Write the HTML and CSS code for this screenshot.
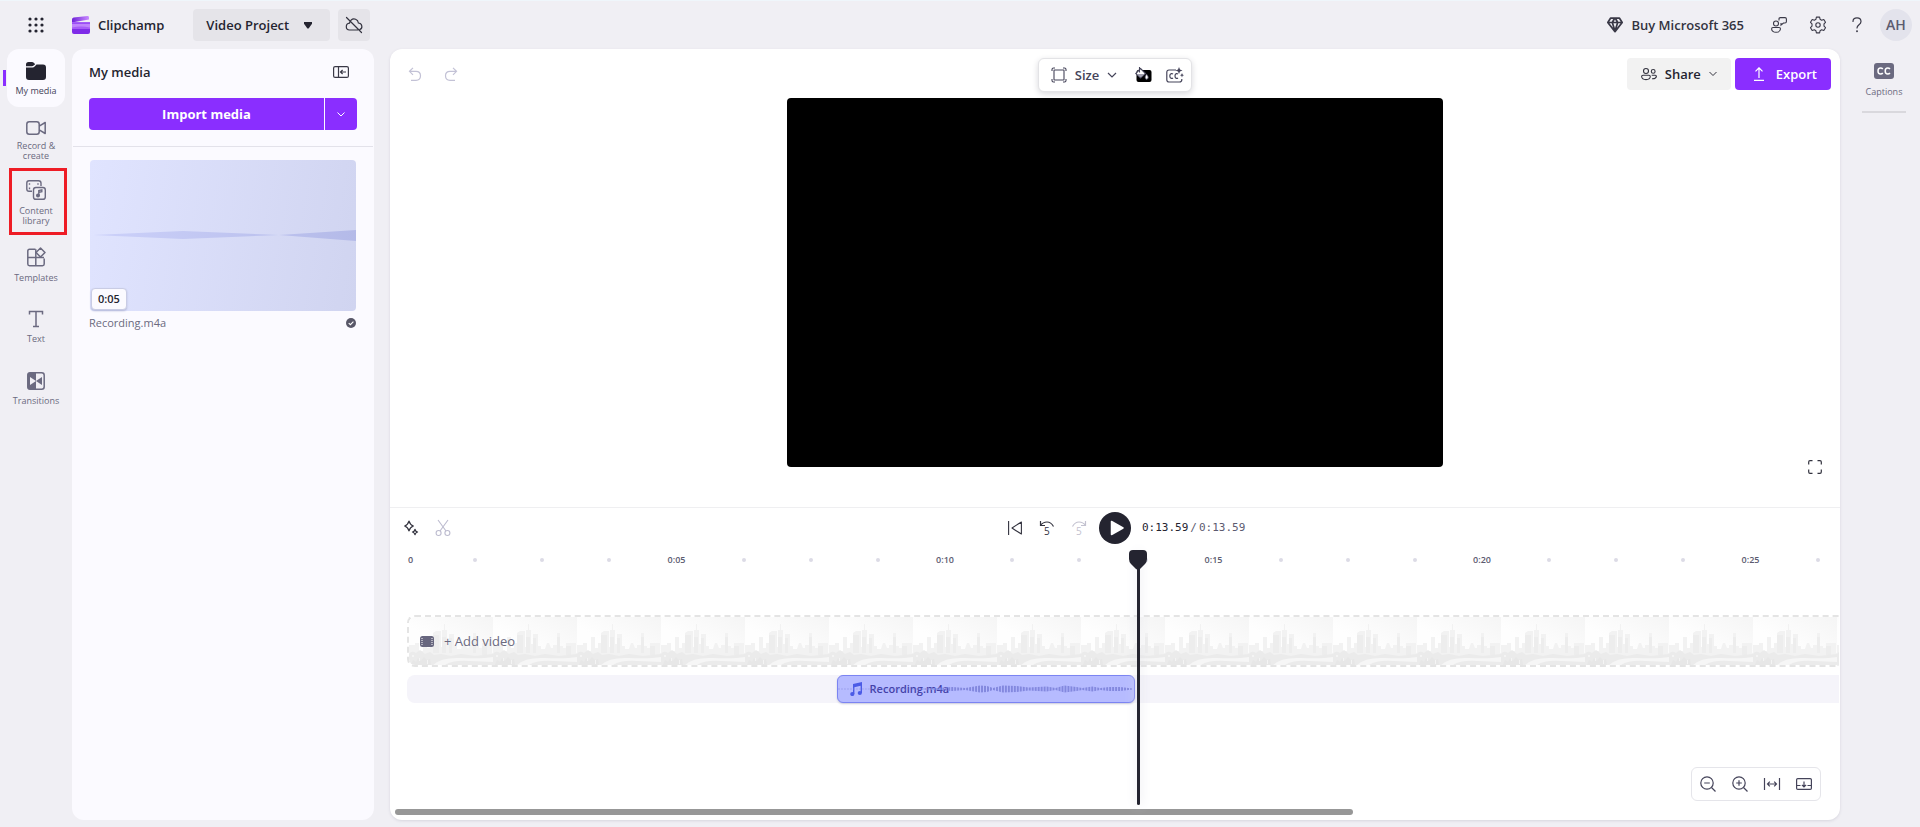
FILE: index.html
```html
<!DOCTYPE html>
<html lang="en">
<head>
<meta charset="utf-8">
<title>Clipchamp - Video Project</title>
<link rel="stylesheet" href="styles.css">
</head>
<body>
<header class="topbar">
  <button class="icon-btn" aria-label="App launcher">
    <svg width="16" height="16" viewBox="0 0 16 16" fill="#242430"><circle cx="2" cy="2" r="1.6"/><circle cx="8" cy="2" r="1.6"/><circle cx="14" cy="2" r="1.6"/><circle cx="2" cy="8" r="1.6"/><circle cx="8" cy="8" r="1.6"/><circle cx="14" cy="8" r="1.6"/><circle cx="2" cy="14" r="1.6"/><circle cx="8" cy="14" r="1.6"/><circle cx="14" cy="14" r="1.6"/></svg>
  </button>
  <a class="brand" href="#">
    <svg width="18" height="18" viewBox="0 0 18 18">
      <defs><linearGradient id="lg" x1="0" x2="1"><stop offset="0" stop-color="#6f22d8"/><stop offset="1" stop-color="#c98bff"/></linearGradient></defs>
      <path d="M0 3.6Q0 2 1.6 1.6L15.6 0Q17 0 17 1.4V3.4L0 6.4Z" fill="url(#lg)"/>
      <path d="M0 6.2H18V12H0Z" fill="#c084fc"/><path d="M0 6.2H18V8H0Z" fill="#9b4df5"/>
      <path d="M0 11.4Q9 9.6 18 11.4V13.6H0Z" fill="#a65cf7"/>
      <path d="M0 13H18V16Q18 18 16 18H2Q0 18 0 16Z" fill="#7f2be8"/>
    </svg>
    <span>Clipchamp</span>
  </a>
  <button class="project-btn"><span>Video Project</span><svg width="8" height="7" viewBox="0 0 8 7"><path d="M0 0H8V1.800L4.600 6.600H3.400L0 1.800Z" fill="#242430"/></svg></button>
  <button class="cloud-btn" aria-label="Not backed up">
    <svg width="18" height="18" viewBox="0 0 18 18" fill="none" stroke="#33333f" stroke-width="1.2" stroke-linecap="round"><path d="M6 4.200C8.800 1.600 13 3.400 13.400 7 17.600 7.400 17.800 12.400 15 13.400M12.500 14H4.500C.300 13.800.200 7.600 4.500 7.200 4.600 6.400 4.900 5.600 5.300 5M1.500 1.500L16.500 16.500"/></svg>
  </button>
  <div class="topbar-right">
    <a class="buy" href="#">
      <svg width="16" height="16" viewBox="0 0 16 16" fill="none" stroke="#3a3947" stroke-width="1.7" stroke-linejoin="round"><path d="M3.500 1.200H12.500L15.200 5.500 8 14.600.8 5.500ZM1 5.500H15M5.300 5.500L8 14 10.700 5.500 8.500 1.500H7.500Z"/></svg>
      <span>Buy Microsoft 365</span>
    </a>
    <button class="icon-btn" aria-label="Feedback"><svg width="16" height="16" viewBox="0 0 16 16" fill="none" stroke="#3a3947" stroke-width="1.1"><circle cx="5" cy="6.500" r="2.500"/><path d="M2 10.500H8Q9.500 10.500 9.500 12 9 15.300 5 15.300T.6 12Q.6 10.500 2 10.500ZM8 3.500V2Q8 .6 9.400.6H14Q15.400.6 15.400 2V4.600Q15.400 6 14 6H12.500L10 8V6"/></svg></button>
    <button class="icon-btn" aria-label="Settings"><svg width="18" height="18" viewBox="0 0 18 18" fill="none" stroke="#3a3947" stroke-width="1.1" stroke-linejoin="round"><circle cx="9" cy="9" r="2.200"/><path d="M7.400 1.100H10.600L11.100 3.300 12.600 4.200 14.800 3.500 16.500 6.300 15 7.900V10.100L16.500 11.700 14.800 14.500 12.600 13.800 11.100 14.700 10.600 16.900H7.400L6.900 14.700 5.400 13.800 3.200 14.500 1.500 11.700 3 10.100V7.900L1.500 6.300 3.200 3.500 5.400 4.200 6.900 3.300Z"/></svg></button>
    <button class="icon-btn" aria-label="Help"><svg width="10" height="16" viewBox="0 0 10 16" fill="none" stroke="#3a3947" stroke-width="1.200" stroke-linecap="round"><path d="M1 4.500Q1 .8 5 .8T9 4.500Q9 6.200 7 7.800T5 11"/><circle cx="5" cy="14.300" r=".4"/></svg></button>
    <button class="avatar">AH</button>
  </div>
</header>

<div class="workspace">
  <nav class="rail">
    <a class="rail-item active" href="#">
      <svg width="20" height="18" viewBox="0 0 20 18" fill="#242430"><path d="M0 4V2.500Q0 0 2.500 0H6Q7 0 7.800.8L9.200 2.200 7.600 3.600Q7 4.200 6 4.200H0Z"/><path d="M0 5.400H6.500Q7.800 5.400 8.600 4.500L10.500 2.500H17Q20 2.500 20 5.500V15Q20 18 17 18H3Q0 18 0 15Z"/></svg>
      <span>My media</span>
    </a>
    <a class="rail-item" href="#">
      <svg width="20" height="14" viewBox="0 0 20 14" fill="none" stroke="#6b6a80" stroke-width="1.500" stroke-linejoin="round"><rect x=".8" y=".8" width="12.400" height="12.400" rx="2.500"/><path d="M13.200 5.200L19.200 1.500V12.500L13.200 8.800"/></svg>
      <span>Record &amp;<br>create</span>
    </a>
    <a class="rail-item highlighted" href="#">
      <svg width="20" height="20" viewBox="0 0 20 20" fill="none" stroke="#6b6a80" stroke-width="1.400"><path d="M6 11.300H3Q.8 11.300.8 9V3Q.8.8 3 .8H12.500Q15 .8 15 3V6"/><rect x="7.500" y="7.500" width="11.800" height="11.800" rx="2.400"/><path d="M3.500 3.200V4.800M3.500 7.600V9.200M12 3.200V4.800M12.800 15.500V10.500L15.800 9.800V11.600L13 12.300"/><circle cx="12" cy="15.600" r="1.300" fill="#6b6a80"/></svg>
      <span>Content<br>library</span>
    </a>
    <a class="rail-item" href="#">
      <svg width="20" height="20" viewBox="0 0 20 20" fill="none" stroke="#6b6a80" stroke-width="1.500" stroke-linejoin="round"><path d="M9.500 2.300H3.500Q1.800 2.300 1.800 4V17Q1.800 18.700 3.500 18.700H16.500Q18.200 18.700 18.200 17V11.500M9.800 2.300V18.700M1.800 10.400H18"/><path d="M14.500 1L19 5.500 14.500 10 10 5.500Z" fill="#f0eff4"/></svg>
      <span>Templates</span>
    </a>
    <a class="rail-item" href="#">
      <svg width="16" height="18" viewBox="0 0 16 18" fill="none" stroke="#6b6a80" stroke-width="1.500"><path d="M1.500 4.500V1.500H14.500V4.500M8 1.500V16.500M5 16.500H11"/></svg>
      <span>Text</span>
    </a>
    <a class="rail-item" href="#">
      <svg width="18" height="18" viewBox="0 0 18 18"><rect x=".8" y=".8" width="16.400" height="16.400" rx="2.500" fill="none" stroke="#6b6a80" stroke-width="1.500"/><path d="M3 .5H9V17.500H3Q.5 17.500.5 15V3Q.5.5 3 .5Z" fill="#6b6a80"/><path d="M3 5L9 9 3 13Z" fill="#f0eff4"/><path d="M15 5L9 9 15 13Z" fill="#6b6a80"/></svg>
      <span>Transitions</span>
    </a>
  </nav>

  <aside class="media">
    <div class="media-head">
      <h1 class="media-title">My media</h1>
      <button class="icon-btn collapse" aria-label="Collapse panel"><svg width="16" height="12" viewBox="0 0 16 12" fill="none" stroke="#3a3947" stroke-width="1.200"><rect x=".6" y=".6" width="14.800" height="10.800" rx="1.500"/><path d="M5.500.6V11.400M13 6H7.500M9.600 4L7.500 6 9.600 8"/></svg></button>
    </div>
    <div class="import">
      <button class="import-main">Import media</button>
      <button class="import-more" aria-label="More import options"><svg width="8" height="5" viewBox="0 0 8 5" fill="none" stroke="#fff"><path d="M.5.5L4 4 7.500.5"/></svg></button>
    </div>
    <div class="media-list">
      <figure class="clip-card">
        <div class="thumb">
          <svg class="thumb-wave" viewBox="0 0 266 16" preserveAspectRatio="none"><defs><linearGradient id="wv"><stop offset="0" stop-color="#ccd1fa"/><stop offset="1" stop-color="#b4bae8"/></linearGradient></defs><path d="M3 7L93 3 189 7 266 2V13L189 7 93 11Z" fill="url(#wv)"/></svg>
          <span class="duration">0:05</span>
        </div>
        <figcaption class="clip-name"><span>Recording.m4a</span><svg width="10" height="10" viewBox="0 0 10 10"><circle cx="5" cy="5" r="5" fill="#585768"/><path d="M2.700 5.100L4.400 6.700 7.400 3.600" fill="none" stroke="#fff" stroke-width="1.100"/></svg></figcaption>
      </figure>
    </div>
  </aside>

  <main class="editor">
    <section class="preview">
      <div class="preview-bar">
        <div class="history">
          <button class="icon-btn" aria-label="Undo"><svg width="14" height="14" viewBox="0 0 14 14" fill="none" stroke="#c3c2d6" stroke-width="1.200"><path d="M5 .8L1.500 4.300 5 7.800M1.500 4.300H8Q12.500 4.300 12.500 8.800T8 13.300H3"/></svg></button>
          <button class="icon-btn" aria-label="Redo"><svg width="14" height="14" viewBox="0 0 14 14" fill="none" stroke="#c3c2d6" stroke-width="1.200"><path d="M9 .8L12.500 4.300 9 7.800M12.500 4.300H6Q1.500 4.300 1.500 8.800T6 13.300H11"/></svg></button>
        </div>
        <div class="size-bar">
          <button class="size-btn"><svg width="16" height="16" viewBox="0 0 16 16" fill="none" stroke="#45445a" stroke-width="1.100"><rect x="3" y="3" width="10" height="10" rx=".5"/><path d="M1 4V2.500Q1 1 2.500 1H4M12 1H13.500Q15 1 15 2.500V4M15 12V13.500Q15 15 13.500 15H12M4 15H2.500Q1 15 1 13.500V12"/></svg><span>Size</span><svg width="10" height="6" viewBox="0 0 10 6" fill="none" stroke="#45445a" stroke-width="1.200"><path d="M1 1L5 5 9 1"/></svg></button>
          <button class="icon-btn" aria-label="Background colour"><svg width="17" height="16" viewBox="0 0 17 16"><rect x="1.500" y="3" width="15" height="12" rx="2" fill="#000"/><path d="M5.500 1.500L10.500 6.500 5.500 11 .8 6.500ZM4.500 0V5.500" fill="#fff" stroke="#45445a" stroke-width="1.100"/><path d="M2 7H9.500L5.500 10.500Z" fill="#a09fae"/><path d="M11.500 7Q14.500 10.500 12.500 12T10 10Z" fill="#fff" stroke="#45445a" stroke-width=".7"/></svg></button>
          <button class="icon-btn" aria-label="Auto captions"><svg width="18" height="16" viewBox="0 0 18 16" fill="none" stroke="#45445a" stroke-width="1.200"><path d="M10 3H3Q.8 3 .8 5.200V12.800Q.8 15 3 15H13.500Q15.800 15 15.800 12.800V12M7 7Q6.200 6.400 5.300 6.600 3.800 7 3.800 9T5.300 11.400Q6.200 11.600 7 11M12 7Q11.200 6.400 10.300 6.600 9 7 9 9T10.300 11.400Q11.200 11.600 12 11"/><path d="M13 0L14 2.500 16.500 3.500 14 4.500 13 7 12 4.500 9.500 3.500 12 2.500ZM16 6L16.600 7.600 18 8.200 16.600 8.800 16 10.400 15.400 8.800 14 8.200 15.400 7.600Z" fill="#45445a" stroke="none"/></svg></button>
        </div>
        <div class="actions">
          <button class="share-btn"><svg width="16" height="14" viewBox="0 0 16 14" fill="none" stroke="#33333f" stroke-width="1.100"><circle cx="5" cy="4" r="2.500"/><circle cx="12.200" cy="4.400" r="1.900"/><path d="M2 8.200H8Q9.300 8.200 9.300 9.500 9 12.600 5 12.600T.6 9.500Q.6 8.200 2 8.200ZM10.700 8.200H14.300Q15.400 8.200 15.400 9.400 15 12 11 11.700"/></svg><span>Share</span><svg width="8" height="6" viewBox="0 0 8 6" fill="none" stroke="#33333f"><path d="M.5 1L4 4.500 7.500 1"/></svg></button>
          <button class="export-btn"><svg width="10" height="14" viewBox="0 0 10 14" fill="none" stroke="#fff" stroke-width="1.200"><path d="M5 11V.8M1.500 4.300L5 .8 8.500 4.300M0 13.300H10"/></svg><span>Export</span></button>
        </div>
      </div>
      <div class="stage">
        <div class="video" role="img" aria-label="Video preview"></div>
        <button class="icon-btn fullscreen" aria-label="Full screen"><svg width="14" height="14" viewBox="0 0 14 14" fill="none" stroke="#33333f" stroke-width="1.200"><path d="M.7 4.500V2Q.7.7 2 .7H4.500M9.500.7H12Q13.300.7 13.300 2V4.500M13.300 9.500V12Q13.300 13.300 12 13.300H9.500M4.500 13.300H2Q.7 13.300.7 12V9.500"/></svg></button>
      </div>
    </section>

    <section class="timeline">
      <div class="controls">
        <div class="controls-left">
          <div class="edit-tools">
            <button class="icon-btn" aria-label="Effects"><svg width="16" height="16" viewBox="0 0 16 16" fill="none" stroke="#33333f" stroke-width="1.300" stroke-linejoin="round"><path d="M6 1.200Q7 4.800 10.300 6 7 7.200 6 10.800 5 7.200 1.700 6 5 4.800 6 1.200ZM12 9.300Q12.500 11.400 14.500 12 12.500 12.600 12 14.700 11.500 12.600 9.500 12 11.500 11.400 12 9.300Z"/></svg></button>
            <button class="icon-btn" aria-label="Split"><svg width="16" height="18" viewBox="0 0 16 18" fill="none" stroke="#bcbbcf" stroke-width="1.100"><circle cx="3.600" cy="14" r="2.500"/><circle cx="12.400" cy="14" r="2.500"/><path d="M3 1L11 12M13 1L5 12"/></svg></button>
          </div>
          <div class="skips">
            <button class="icon-btn" aria-label="Skip to start"><svg width="14" height="14" viewBox="0 0 14 14" fill="none" stroke="#33333f" stroke-width="1.100" stroke-linejoin="round"><path d="M.6 0V14M13.400 1V13Q9 10.500 4 7 9 3.500 13.400 1Z"/></svg></button>
            <button class="icon-btn" aria-label="Back 5 seconds"><svg width="16" height="20" viewBox="0 0 16 20" fill="none" stroke="#33333f" stroke-width="1.200"><path d="M1.500 3V7.500H6M1.500 7.500Q4 4 8 4T14.500 8.500"/><text x="5" y="17" class="five">5</text></svg></button>
            <button class="icon-btn muted" aria-label="Forward 5 seconds"><svg width="16" height="20" viewBox="0 0 16 20" fill="none" stroke="#c3c2d0" stroke-width="1.200"><path d="M14.500 3V7.500H10M14.500 7.500Q12 4 8 4T1.500 8.500"/><text x="5" y="17" class="five">5</text></svg></button>
          </div>
        </div>
        <button class="play" aria-label="Play"><svg width="14" height="16" viewBox="0 0 14 16"><path d="M1.500 1.500L13 8 1.500 14.500Z" fill="#fff" stroke="#fff" stroke-width="1.500" stroke-linejoin="round"/></svg></button>
        <div class="time"><span class="time-now">0:13.59</span><span>/</span><span>0:13.59</span></div>
      </div>

      <div class="tracks">
        <div class="ruler">
          <div class="five-sec"><span class="tick first"><b>0</b></span><span class="tick"><i></i></span><span class="tick"><i></i></span><span class="tick"><i></i></span></div>
          <div class="five-sec"><span class="tick"><b>0:05</b></span><span class="tick"><i></i></span><span class="tick"><i></i></span><span class="tick"><i></i></span></div>
          <div class="five-sec"><span class="tick"><b>0:10</b></span><span class="tick"><i></i></span><span class="tick"><i></i></span><span class="tick"><i></i></span></div>
          <div class="five-sec"><span class="tick"><b>0:15</b></span><span class="tick"><i></i></span><span class="tick"><i></i></span><span class="tick"><i></i></span></div>
          <div class="five-sec"><span class="tick"><b>0:20</b></span><span class="tick"><i></i></span><span class="tick"><i></i></span><span class="tick"><i></i></span></div>
          <div class="five-sec"><span class="tick"><b>0:25</b></span><span class="tick"><i></i></span></div>
        </div>
        <button class="video-track">
          <svg class="skyline" width="100%" height="48">
            <defs>
              <linearGradient id="sky" x1="1" y1="0" x2="0" y2="1"><stop offset="0" stop-color="#f5f5f5"/><stop offset=".6" stop-color="#fefefe"/></linearGradient>
              <pattern id="city" width="84" height="48" patternUnits="userSpaceOnUse">
                <rect width="84" height="48" fill="url(#sky)"/>
                <path d="M0 28H6V26H10V34H14V20H18V31H21V26H24V16L27 14H32V30H33V13H35V7H36V13H38V27H40V17H45V29H48V32H52L54 26H56L58 31H60V28H64V16H67V29H70V31H73V26H83V36H84V48H0Z" fill="#f2f2f2"/>
                <path d="M24 18H30V36H24ZM33 20H37V36H33ZM40 21H43V36H40ZM64 20H67V36H64ZM73 29H78V38H73Z" fill="#ededed"/>
                <path d="M0 37Q3 33 7 36L11 33 16 37 21 35 25 38 32 37 42 39 52 37 66 39 84 37V48H0Z" fill="#ebebeb"/>
                <path d="M24 48Q32 40 52 41 72 42 84 40V45L60 44Q44 43 36 48Z" fill="#f6f6f6"/>
                <path d="M2 48L4 43 7 45 9 41 12 44 15 40 18 43 21 42 22 48Z" fill="#e7e7e7"/>
                <path d="M10 41H11V44H10ZM18 43H19V47H18ZM3 38H5V40H3Z" fill="#f4f4f4"/>
              </pattern>
            </defs>
            <rect width="100%" height="48" fill="url(#city)"/>
          </svg>
          <span class="add-video"><svg width="14" height="11" viewBox="0 0 14 11"><rect width="14" height="11" rx="2.500" fill="#68677f"/><path d="M2 2V9.500M12 2V9.500" stroke="#fff" stroke-dasharray="1 1" fill="none"/></svg><span>+ Add video</span></span>
        </button>
        <div class="audio-track">
          <button class="audio-clip">
            <svg class="clip-wave" width="298" height="26" viewBox="0 0 298 26" preserveAspectRatio="none">
              <defs><pattern id="bars" width="3" height="26" patternUnits="userSpaceOnUse"><rect width="2" height="26" fill="#8388de"/></pattern></defs>
              <path d="M0 12.700H75L100 12 115 11 128 12 143 9.500 150 10 156 12 166 9.500 180 10 192 11.500 210 10.500 219 12 228 9.500 240 11 246 12 256 10.500 264 12 273 11 284 11 297 12.500V13.500L284 15 273 15 264 14 256 15.500 246 14 240 15 228 16.500 219 14 210 15.500 192 14.500 180 16 166 16.500 156 14 150 16 143 16.500 128 14 115 15 100 14 75 13.300H0Z" fill="url(#bars)"/>
            </svg>
            <svg width="12" height="14" viewBox="0 0 12 14" fill="#4b5be6"><path d="M3 2L12 0V11H10.600V3.800L4.400 5.200V12H3Z"/><circle cx="2.300" cy="12" r="2.100"/><circle cx="9.800" cy="11" r="2.100"/></svg>
            <span>Recording.m4a</span>
          </button>
        </div>
        <div class="playhead"><svg width="18" height="20" viewBox="0 0 18 20"><path d="M4 0H14Q18 0 18 4V9Q18 12 16 14L11 19Q9 20.500 7 19L2 14Q0 12 0 9V4Q0 0 4 0Z" fill="#242430"/></svg></div>
      </div>

      <div class="timeline-foot">
        <div class="zoom-bar">
          <button class="icon-btn" aria-label="Zoom out"><svg width="16" height="16" viewBox="0 0 16 16" fill="none" stroke="#45445a" stroke-width="1.200"><circle cx="7" cy="7" r="6.200"/><path d="M11.500 11.500L15.500 15.500M4.200 7H9.800"/></svg></button>
          <button class="icon-btn" aria-label="Zoom in"><svg width="16" height="16" viewBox="0 0 16 16" fill="none" stroke="#45445a" stroke-width="1.200"><circle cx="7" cy="7" r="6.200"/><path d="M11.500 11.500L15.500 15.500M4.200 7H9.800M7 4.200V9.800"/></svg></button>
          <button class="icon-btn" aria-label="Zoom to fit"><svg width="18" height="14" viewBox="0 0 18 14" fill="none" stroke="#45445a" stroke-width="1.200"><path d="M1.500 1V13M16.500 1V13M4.500 7H13.500M6.800 4.600L4.500 7 6.800 9.400M11.200 4.600L13.500 7 11.200 9.400"/></svg></button>
          <button class="icon-btn" aria-label="Minimise timeline"><svg width="16" height="14" viewBox="0 0 16 14" fill="none" stroke="#45445a" stroke-width="1.200"><rect x=".6" y="1.600" width="14.800" height="10.800" rx="1.200"/><path d="M.6 8.500H4.500M11.500 8.500H15.400M8 4.500V10M5.900 7.900L8 10 10.100 7.900"/></svg></button>
        </div>
        <div class="scrollbar"></div>
      </div>
    </section>
  </main>

  <aside class="right-rail">
    <a class="captions" href="#"><svg width="20" height="16" viewBox="0 0 20 16"><rect width="20" height="16" rx="3" fill="#6b6a80"/><path d="M8.800 6Q8 5 6.500 5 4 5 4 8T6.500 11Q8 11 8.800 10M16 6Q15.200 5 13.700 5 11.200 5 11.200 8T13.700 11Q15.200 11 16 10" fill="none" stroke="#fff" stroke-width="1.500"/></svg><span>Captions</span></a>
    <hr class="rail-rule">
  </aside>
</div>
</body>
</html>
```
FILE: styles.css
```css
* { box-sizing: border-box; }

body {
  margin: 0;
  min-height: 100vh;
  display: flex;
  flex-direction: column;
  background: #f0eff4;
  border-top: 1px solid #eff6fb;
  color: #242430;
  font: 13px/16px "Open Sans", "Noto Sans", sans-serif;
}

button {
  margin: 0;
  padding: 0;
  border: 0;
  background: none;
  color: inherit;
  font: inherit;
  cursor: pointer;
}

a { color: inherit; text-decoration: none; }
svg { display: block; flex: none; }

.icon-btn {
  width: 32px;
  height: 32px;
  flex: none;
  display: flex;
  align-items: center;
  justify-content: center;
}

/* Top bar */
.topbar {
  display: flex;
  align-items: center;
  height: 48px;
  padding: 0 8px 0 20px;
  font-weight: 600;
}
.brand { display: flex; align-items: center; gap: 8px; margin-left: 20px; }
.project-btn {
  display: flex;
  align-items: center;
  justify-content: space-between;
  width: 137px;
  height: 32px;
  margin-left: 29px;
  padding: 0 18px 0 13px;
  border-radius: 4px;
  background: #e5e4e9;
}
.cloud-btn {
  display: flex;
  align-items: center;
  justify-content: center;
  width: 32px;
  height: 32px;
  margin-left: 8px;
  border-radius: 4px;
  background: #e5e4e9;
}
.topbar-right { display: flex; align-items: center; gap: 7px; margin-left: auto; }
.buy { display: flex; align-items: center; gap: 8px; margin-right: 12px; color: #33333f; }
.avatar {
  width: 32px;
  height: 32px;
  border-radius: 50%;
  background: #e3e3ec;
  color: #5c5b70;
  font-size: 14px;
}

.workspace { flex: 1; display: flex; padding-bottom: 7px; }

/* Left rail */
.rail {
  flex: none;
  width: 72px;
  display: flex;
  flex-direction: column;
  gap: 4px;
  padding-left: 7px;
}
.rail-item {
  position: relative;
  width: 58px;
  height: 58px;
  display: flex;
  flex-direction: column;
  align-items: center;
  justify-content: center;
  gap: 6px;
  padding-top: 1px;
  border-radius: 12px;
  color: #6b6a80;
  font-size: 9px;
  line-height: 10px;
  text-align: center;
}
.rail-item.active { background: #fbfaff; color: #45445a; }
.rail-item.active::before {
  content: "";
  position: absolute;
  left: -4px;
  top: 21px;
  width: 3px;
  height: 16px;
  background: #8a2eff;
}
.rail-item.highlighted::after {
  content: "";
  position: absolute;
  inset: -5px -2px -4px 2px;
  border: 3px solid #ee1c25;
}

/* Media panel */
.media {
  flex: none;
  width: 302px;
  border-radius: 12px;
  background: #fbfaff;
}
.media-head {
  display: flex;
  align-items: center;
  justify-content: space-between;
  padding: 7px 17px 10px;
}
.media-title { margin: 0; font-size: 13px; line-height: 16px; font-weight: 600; }
.import {
  display: flex;
  gap: 1px;
  margin: 0 17px;
  color: #fff;
}
.import-main {
  flex: 1;
  height: 32px;
  border-radius: 4px 0 0 4px;
  background: #8a2eff;
  font-size: 13px;
  font-weight: 700;
}
.import-more {
  width: 32px;
  display: flex;
  align-items: center;
  justify-content: center;
  border-radius: 0 4px 4px 0;
  background: #8a2eff;
}
.media-list {
  margin: 16px 1px 0;
  padding: 13px 16px;
  border-top: 1px solid #e3e2ea;
}
.clip-card { margin: 0; }
.thumb {
  position: relative;
  height: 151px;
  display: flex;
  align-items: center;
  margin: 0 1px;
  border-radius: 4px;
  background: linear-gradient(100deg, #e0e4ff, #d0d4f0);
}
.thumb-wave { width: 100%; height: 16px; }
.duration {
  position: absolute;
  left: 1px;
  bottom: 1px;
  padding: 2px 6px;
  border: 1px solid #c9cce4;
  border-radius: 4px;
  background: #fbfaff;
  font-size: 11px;
  font-weight: 600;
  box-shadow: 0 1px 2px #b4b8d8;
}
.clip-name {
  display: flex;
  align-items: center;
  justify-content: space-between;
  padding: 4px 1px 0 0;
  color: #6b6a80;
  font-size: 11px;
}

/* Editor */
.editor {
  flex: 1;
  min-width: 0;
  display: flex;
  flex-direction: column;
  margin-left: 16px;
  border-radius: 12px;
  background: #fff;
  box-shadow: 0 1px 3px #d6d5dd;
}
.preview {
  flex: 1;
  display: flex;
  flex-direction: column;
  padding-top: 9px;
}
.preview-bar {
  display: grid;
  grid-template-columns: 1fr auto 1fr;
  align-items: start;
  padding: 0 9px;
}
.history { display: flex; gap: 4px; }
.size-bar {
  display: flex;
  align-items: center;
  height: 34px;
  padding-left: 12px;
  border: 1px solid #e3e3e6;
  border-radius: 6px;
  background: #fff;
  box-shadow: 0 2px 6px #d8d8dc;
}
.size-btn {
  display: flex;
  align-items: center;
  gap: 8px;
  margin-right: 10px;
  color: #45445a;
  font-weight: 600;
}
.actions { display: flex; justify-content: flex-end; gap: 4px; font-weight: 600; }
.share-btn, .export-btn {
  display: flex;
  align-items: center;
  height: 32px;
  border-radius: 4px;
}
.share-btn { gap: 8px; padding: 0 14px; background: #f2f2f2; }
.export-btn { gap: 12px; padding: 0 14px 0 19px; background: #8a2eff; color: #fff; }
.stage {
  flex: 1;
  display: grid;
  grid-template-columns: 1fr minmax(0, 656px) 1fr;
  padding: 6px 9px 24px;
}
.video {
  grid-column: 2;
  align-self: start;
  aspect-ratio: 16 / 9;
  border-radius: 4px;
  background: #000;
}
.fullscreen { grid-column: 3; align-self: end; justify-self: end; }

/* Timeline */
.timeline {
  display: flex;
  flex-direction: column;
  border-top: 1px solid #efeff1;
}
.controls {
  display: grid;
  grid-template-columns: 1fr 32px 1fr;
  align-items: center;
  padding: 4px 5px;
}
.controls-left { display: flex; justify-content: space-between; padding-right: 4px; }
.edit-tools, .skips { display: flex; }
.five { fill: #33333f; stroke: none; font-size: 10px; }
.muted .five { fill: #c3c2d0; }
.play {
  width: 32px;
  height: 32px;
  display: flex;
  align-items: center;
  justify-content: center;
  padding-left: 3px;
  border-radius: 50%;
  background: #242430;
}
.time {
  display: flex;
  gap: 2px;
  margin-left: 11px;
  color: #5c5b70;
  font: 11px/16px "DejaVu Sans Mono", monospace;
}
.time-now { color: #242430; }

.tracks { position: relative; margin-left: 17px; padding-right: 1px; }
.ruler {
  display: flex;
  overflow: hidden;
  margin-bottom: 46px;
  padding-top: 3px;
  color: #5c5b70;
  font-size: 9px;
}
.five-sec { flex: 0 0 18.75%; display: grid; grid-template-columns: repeat(4, 1fr); }
.tick {
  width: 2px;
  height: 18px;
  display: flex;
  align-items: center;
  justify-content: center;
}
.tick b { font-weight: 600; }
.tick i { flex: none; width: 4px; height: 4px; border-radius: 50%; background: #dcdbe6; }
.tick.first { width: auto; justify-content: flex-start; padding-left: 1px; }
.video-track {
  position: relative;
  display: block;
  width: 100%;
  height: 52px;
  overflow: hidden;
  border: 2px dashed #e4e4e4;
  border-right: 0;
  border-radius: 8px 0 0 8px;
}
.add-video {
  position: absolute;
  inset: 0 auto 0 11px;
  display: flex;
  align-items: center;
  gap: 10px;
  color: #6b6a80;
}
.audio-track {
  height: 28px;
  margin-top: 8px;
  padding-left: 30%;
  border-radius: 8px 0 0 8px;
  background: #f5f4fa;
}
.audio-clip {
  position: relative;
  width: 298px;
  height: 28px;
  display: flex;
  align-items: center;
  gap: 8px;
  padding-left: 12px;
  border: 1px solid #7b84f2;
  border-radius: 6px;
  background: #b6bbff;
  color: #4240a8;
  font-size: 11px;
  font-weight: 600;
  box-shadow: 0 1px 2px #c8c8da;
}
.clip-wave { position: absolute; inset: 0; width: 100%; }
.playhead {
  position: absolute;
  left: 51%;
  top: 2px;
  bottom: -102px;
  width: 3px;
  display: flex;
  justify-content: center;
  margin-left: -1px;
  border-radius: 2px;
  background: #242430;
  box-shadow: 0 0 12px #dcdce4;
}
.timeline-foot { padding: 64px 5px 5px; }
.zoom-bar {
  display: flex;
  width: max-content;
  margin: 0 14px 8px auto;
  border: 1px solid #e5e5ea;
  border-radius: 6px;
}
.scrollbar { width: 66.5%; height: 6px; border-radius: 3px; background: #979797; }

/* Right rail */
.right-rail { flex: none; width: 80px; padding: 14px 14px 0 22px; }
.captions {
  display: flex;
  flex-direction: column;
  align-items: center;
  gap: 8px;
  color: #6b6a80;
  font-size: 9px;
  line-height: 10px;
}
.rail-rule { height: 2px; margin: 14px 0 0; border: 0; background: #d9d8dd; }
```
